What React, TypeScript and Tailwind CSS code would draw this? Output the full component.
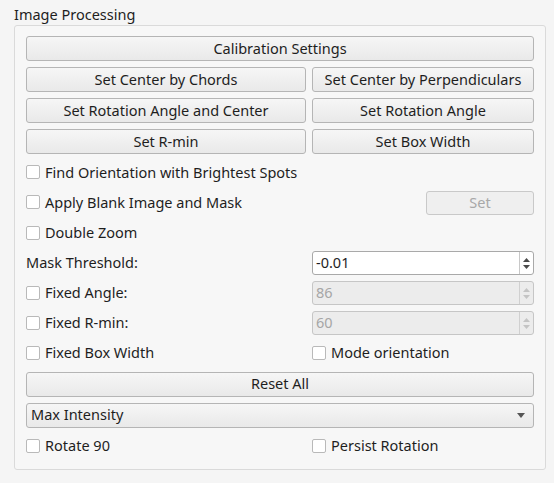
import type { ReactNode } from 'react'

const font = { fontFamily: '"Noto Sans", "Open Sans", sans-serif' }

function Btn({ children, disabled }: { children: ReactNode; disabled?: boolean }) {
  return (
    <button
      type="button"
      className={
        disabled
          ? 'h-[24px] w-full rounded-[3px] border border-[#c9c9c9] bg-[#efefef] text-[14.5px] text-[#a8a8a8]'
          : 'h-[25px] w-full rounded-[3px] border border-[#b5b5b5] bg-gradient-to-b from-[#f6f6f6] to-[#e9e9e9] text-[14.5px] text-[#1e1e1e]'
      }
    >
      {children}
    </button>
  )
}

function Check({ label }: { label: string }) {
  return (
    <label className="flex h-[24px] items-center gap-[5px] text-[14.5px] text-[#1e1e1e]">
      <span className="h-[14px] w-[14px] rounded-[2px] border border-[#b9b9b9] bg-white" />
      {label}
    </label>
  )
}

function Spin({ value, disabled }: { value: string; disabled?: boolean }) {
  return (
    <div
      className={
        'flex h-[24px] w-full items-stretch rounded-[3px] border ' +
        (disabled ? 'border-[#c6c6c6] bg-[#ececec] text-[#a6a6a6]' : 'border-[#a9a9a9] bg-white text-[#1e1e1e]')
      }
    >
      <span className="flex flex-1 items-center pl-[3px] text-[14.5px]">{value}</span>
      <span
        className={
          'flex w-[14px] flex-col items-center justify-center gap-[3px] border-l ' +
          (disabled ? 'border-[#d0d0d0]' : 'border-[#c8c8c8]')
        }
      >
        <svg width="7" height="4" viewBox="0 0 7 4">
          <path d="M0 4 L3.5 0 L7 4 Z" fill={disabled ? '#c4c4c4' : '#4a4a4a'} />
        </svg>
        <svg width="7" height="4" viewBox="0 0 7 4">
          <path d="M0 0 L3.5 4 L7 0 Z" fill={disabled ? '#c4c4c4' : '#4a4a4a'} />
        </svg>
      </span>
    </div>
  )
}

export default function App() {
  return (
    <div className="h-[483px] w-[554px] bg-[#f5f5f5] pt-[5px] pl-[14px]" style={font}>
      <div className="text-[14.5px] leading-[18px] text-[#1e1e1e]">Image Processing</div>
      <div className="mt-[2px] w-[532px] rounded-[3px] border border-[#dadada] bg-[#f7f7f7] pt-[10px] pb-[11px] pl-[11px] pr-[11px]">
        <div className="grid grid-cols-[280px_222px] gap-x-[6px] gap-y-[6px]">
          <div className="col-span-2">
            <Btn>Calibration Settings</Btn>
          </div>
          <Btn>Set Center by Chords</Btn>
          <Btn>Set Center by Perpendiculars</Btn>
          <Btn>Set Rotation Angle and Center</Btn>
          <Btn>Set Rotation Angle</Btn>
          <Btn>Set R-min</Btn>
          <Btn>Set Box Width</Btn>

          <div className="col-span-2">
            <Check label="Find Orientation with Brightest Spots" />
          </div>
          <Check label="Apply Blank Image and Mask" />
          <div className="flex justify-end">
            <div className="w-[108px]">
              <Btn disabled>Set</Btn>
            </div>
          </div>
          <div className="col-span-2">
            <Check label="Double Zoom" />
          </div>
          <div className="flex h-[24px] items-center text-[14.5px] text-[#1e1e1e]">Mask Threshold:</div>
          <Spin value="-0.01" />
          <Check label="Fixed Angle:" />
          <Spin value="86" disabled />
          <Check label="Fixed R-min:" />
          <Spin value="60" disabled />
          <Check label="Fixed Box Width" />
          <Check label="Mode orientation" />

          <div className="col-span-2">
            <Btn>Reset All</Btn>
          </div>
          <div className="col-span-2">
            <div className="flex h-[25px] items-center justify-between rounded-[3px] border border-[#b5b5b5] bg-gradient-to-b from-[#f6f6f6] to-[#e9e9e9] pl-[4px] pr-[8px] text-[14.5px] text-[#1e1e1e]">
              <span>Max Intensity</span>
              <svg width="8" height="5" viewBox="0 0 8 5">
                <path d="M0 0 L4 5 L8 0 Z" fill="#555" />
              </svg>
            </div>
          </div>
          <Check label="Rotate 90" />
          <Check label="Persist Rotation" />
        </div>
      </div>
    </div>
  )
}
